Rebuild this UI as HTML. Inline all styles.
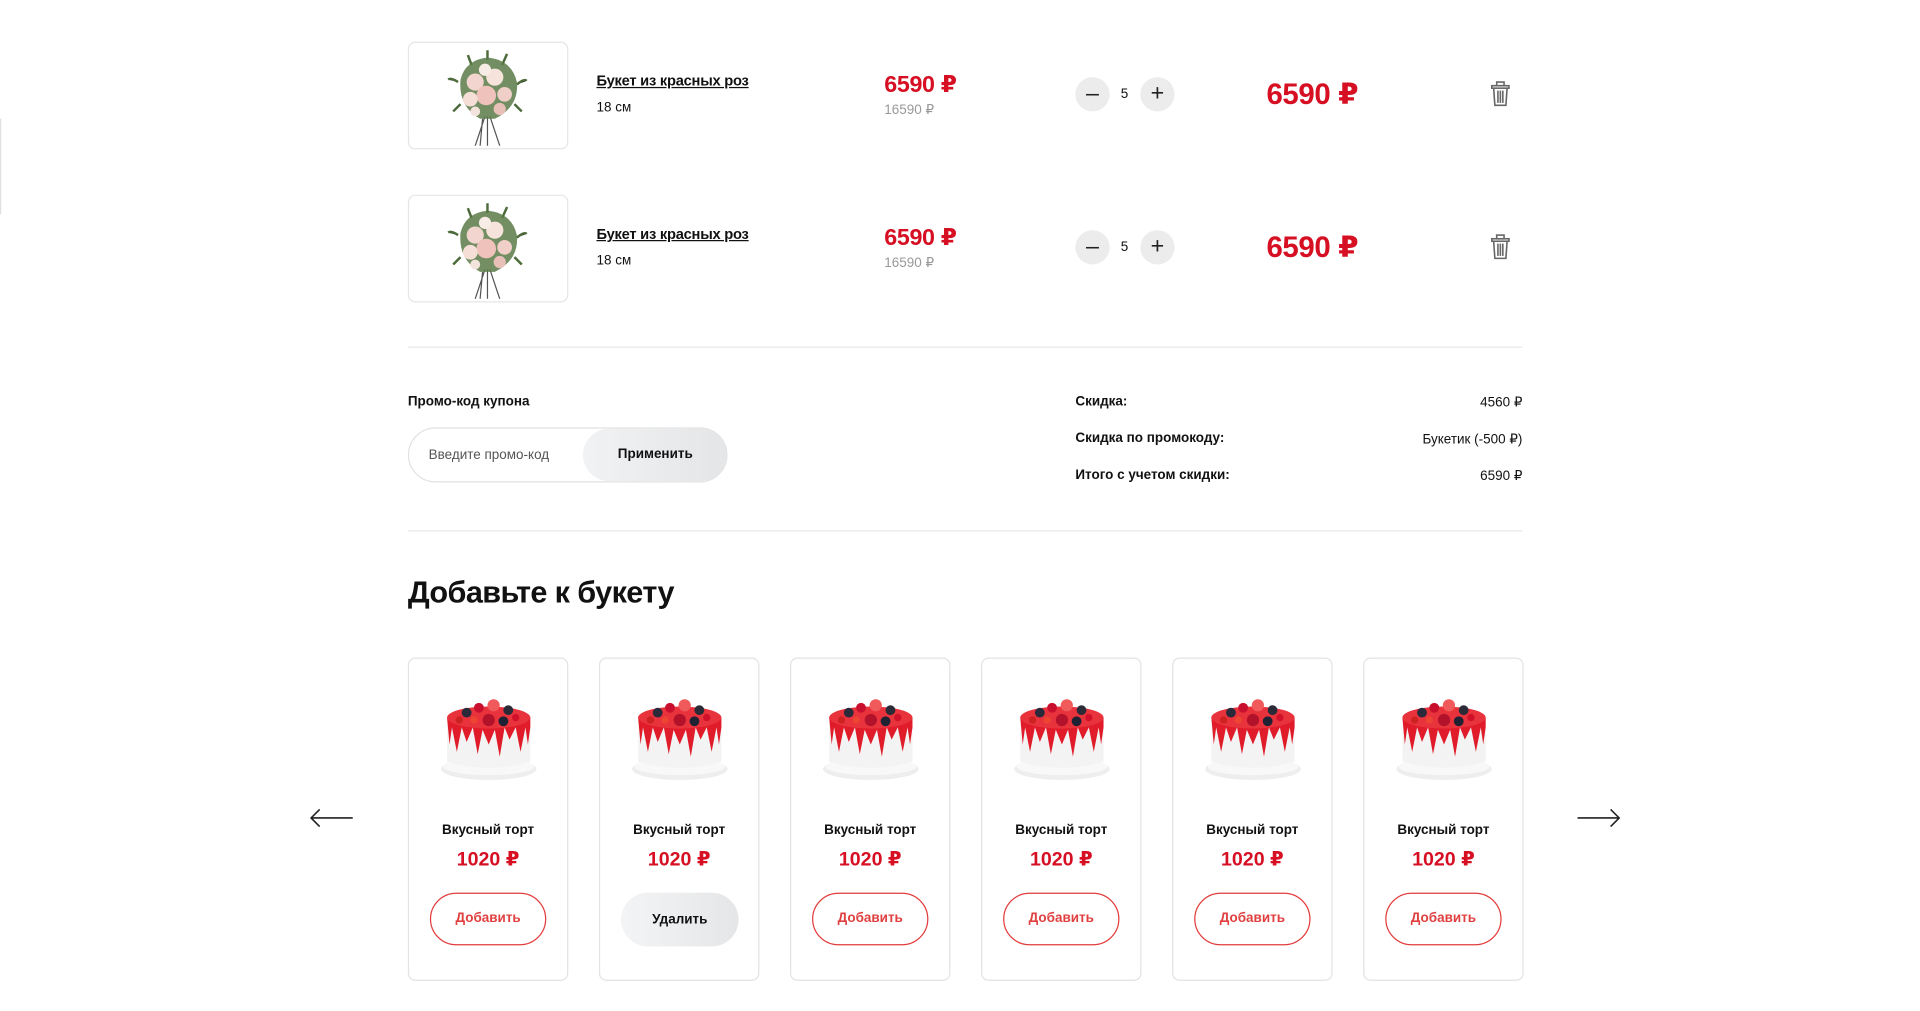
<!DOCTYPE html>
<html><head><meta charset="utf-8"><style>
html,body{margin:0;padding:0;background:#fff;width:1920px;height:1011px;overflow:hidden}
#w{position:absolute;left:0;top:0;width:1570px;height:826px;transform:scale(1.2248,1.2245);transform-origin:0 0;font-family:"Liberation Sans","DejaVu Sans",sans-serif;color:#111}
.a{position:absolute}
.img{border:1px solid #e6e6e6;border-radius:6px;width:129px;height:86px;background:#fff}
.t{font-size:12px;font-weight:bold;text-decoration:underline;letter-spacing:-.2px}
.s{font-size:11px}
.pr{color:#d60f23;font-weight:bold;font-size:19px;letter-spacing:-.3px}
.old{color:#999;font-size:11px}
.c{width:28px;height:28px;border-radius:50%;background:#ececec;text-align:center;line-height:27px;font-size:19px;color:#222}
.tot{color:#d60f23;font-weight:bold;font-size:24px;letter-spacing:-.3px}
.hr{height:1px;background:#e9e9e9;left:333px;width:910px}
.lb{font-size:11px;font-weight:bold}
.v{font-size:11px;right:327px}
.card{width:129px;height:262px;border:1px solid #e3e3e3;border-radius:6px;top:537px}
.nm{position:absolute;left:0;right:0;top:134px;text-align:center;font-size:11px;font-weight:bold}
.cp{position:absolute;left:0;right:0;top:154px;text-align:center;font-size:16px;font-weight:bold;color:#d60f23}
.btn{position:absolute;left:17px;top:191px;width:93px;height:41px;border:1.5px solid #e33b3b;border-radius:22px;text-align:center;line-height:41px;font-size:11px;color:#e04040;font-weight:bold}
.del{border:none;background:linear-gradient(90deg,#f3f4f6,#e5e6e8);color:#111;width:96px;height:44px;line-height:44px}
.cake{position:absolute;left:25px;top:26px}
</style></head><body><div id="w">
<div class="a" style="left:0;top:97px;width:1px;height:78px;background:#e0e0e0"></div>

<svg width="0" height="0" style="position:absolute"><defs>
<g id="bq">
<path d="M56 58 L48 82 M58 58 L58 82 M60 58 L68 82 M54 60 L52 82" stroke="#555" stroke-width="1" fill="none"/>
<path d="M34 30 q-6 -4 -8 -2 M82 32 q6-5 8-3 M45 16 l-3-8 M70 16 l4-9 M58 12 l0-8 M36 48 l-6 6 M80 48 l6 6" stroke="#4d6b3a" stroke-width="2"/>
<path d="M36 28 Q40 12 58 10 Q78 12 82 30 Q84 50 64 60 L52 60 Q34 50 36 28Z" fill="#5b7a46" opacity=".85"/>
<circle cx="48" cy="30" r="7" fill="#f2d5cf"/><circle cx="64" cy="26" r="7" fill="#f6e4dc"/><circle cx="57" cy="41" r="8" fill="#efc2bb"/>
<circle cx="44" cy="44" r="6" fill="#f4ded6"/><circle cx="72" cy="40" r="6" fill="#f0cfc8"/><circle cx="56" cy="20" r="5" fill="#f7ece6"/>
<circle cx="68" cy="52" r="5" fill="#e9c0b8"/><circle cx="48" cy="54" r="4" fill="#f3e3dd"/>
</g>
<g id="ck">
<ellipse cx="40" cy="64" rx="39" ry="9" fill="#eeeeee"/><ellipse cx="40" cy="62" rx="37" ry="7" fill="#f8f8f8"/>
<path d="M6 22 L6 58 Q40 68 74 58 L74 22 Z" fill="#f3f3f3"/>
<path d="M6 22 Q40 32 74 22 L74 30 L72 44 L70 30 L66 50 L62 30 L57 40 L53 30 L49 54 L45 32 L40 44 L35 32 L31 52 L27 30 L22 42 L18 30 L14 50 L10 30 L8 44 Z" fill="#e01b2a"/>
<ellipse cx="40" cy="22" rx="34" ry="9" fill="#e8323c"/>
<circle cx="22" cy="18" r="4" fill="#2a2a3a"/><circle cx="32" cy="14" r="4" fill="#c8102e"/><circle cx="44" cy="12" r="5" fill="#f05a5a"/>
<circle cx="56" cy="16" r="4" fill="#2b2b38"/><circle cx="40" cy="24" r="5" fill="#b3122b"/><circle cx="28" cy="24" r="3" fill="#e43"/>
<circle cx="52" cy="25" r="4" fill="#1f2233"/><circle cx="62" cy="22" r="3" fill="#d1102a"/><circle cx="16" cy="24" r="3" fill="#c22"/>
</g>
<g id="tr" fill="none" stroke="#666" stroke-width="1.3">
<rect x="1" y="4" width="14" height="2"/><rect x="5" y="1" width="6" height="3"/><path d="M2.5 6 L3.5 20 L12.5 20 L13.5 6"/><path d="M6 8 V18 M8 8 V18 M10 8 V18"/>
</g>
</defs></svg>

<div class="a img" style="left:333px;top:34px"><svg width="129" height="86"><use href="#bq" x="6" y="2"/></svg></div>
<div class="a t" style="left:487px;top:59px">Букет из красных роз</div>
<div class="a s" style="left:487px;top:82px">18 см</div>
<div class="a pr" style="left:722px;top:58px">6590 ₽</div>
<div class="a old" style="left:722px;top:83px">16590 ₽</div>
<div class="a c" style="left:878px;top:63px">–</div>
<div class="a s" style="left:915px;top:71px">5</div>
<div class="a c" style="left:931px;top:63px">+</div>
<div class="a tot" style="left:1034px;top:63px">6590 ₽</div>
<svg class="a" style="left:1217px;top:66px" width="16" height="22"><use href="#tr"/></svg>

<div class="a img" style="left:333px;top:159px"><svg width="129" height="86"><use href="#bq" x="6" y="2"/></svg></div>
<div class="a t" style="left:487px;top:184px">Букет из красных роз</div>
<div class="a s" style="left:487px;top:207px">18 см</div>
<div class="a pr" style="left:722px;top:183px">6590 ₽</div>
<div class="a old" style="left:722px;top:208px">16590 ₽</div>
<div class="a c" style="left:878px;top:188px">–</div>
<div class="a s" style="left:915px;top:196px">5</div>
<div class="a c" style="left:931px;top:188px">+</div>
<div class="a tot" style="left:1034px;top:188px">6590 ₽</div>
<svg class="a" style="left:1217px;top:191px" width="16" height="22"><use href="#tr"/></svg>

<div class="a hr" style="top:283px"></div>
<div class="a lb" style="left:333px;top:322px">Промо-код купона</div>
<div class="a" style="left:333px;top:349px;width:259px;height:43px;border:1px solid #e2e2e2;border-radius:23px;overflow:hidden">
<div class="a s" style="left:16px;top:16px;color:#555">Введите промо-код</div>
<div class="a" style="left:142px;top:0;width:118px;height:43px;border-radius:23px;background:linear-gradient(90deg,#f1f2f4,#e4e5e7);text-align:center;line-height:43px;font-size:11px;font-weight:bold">Применить</div>
</div>
<div class="a lb" style="left:878px;top:322px">Скидка:</div>
<div class="a lb" style="left:878px;top:352px">Скидка по промокоду:</div>
<div class="a lb" style="left:878px;top:382px">Итого с учетом скидки:</div>
<div class="a v" style="top:322px">4560 ₽</div>
<div class="a v" style="top:352px">Букетик (-500 ₽)</div>
<div class="a v" style="top:382px">6590 ₽</div>
<div class="a hr" style="top:433px"></div>
<div class="a" style="left:333px;top:470px;font-size:25px;font-weight:bold;letter-spacing:-.5px">Добавьте к букету</div>

<svg class="a" style="left:252px;top:660px" width="37" height="16"><path d="M36 8 H2 M9 1 L2 8 L9 15" stroke="#222" stroke-width="1.3" fill="none"/></svg>
<svg class="a" style="left:1287px;top:660px" width="37" height="16"><path d="M1 8 H35 M28 1 L35 8 L28 15" stroke="#222" stroke-width="1.3" fill="none"/></svg>

<div class="a card" style="left:333px"><svg class="cake" width="80" height="76"><use href="#ck"/></svg><div class="nm">Вкусный торт</div><div class="cp">1020 ₽</div><div class="btn">Добавить</div></div>
<div class="a card" style="left:489px"><svg class="cake" width="80" height="76"><use href="#ck"/></svg><div class="nm">Вкусный торт</div><div class="cp">1020 ₽</div><div class="btn del">Удалить</div></div>
<div class="a card" style="left:645px"><svg class="cake" width="80" height="76"><use href="#ck"/></svg><div class="nm">Вкусный торт</div><div class="cp">1020 ₽</div><div class="btn">Добавить</div></div>
<div class="a card" style="left:801px"><svg class="cake" width="80" height="76"><use href="#ck"/></svg><div class="nm">Вкусный торт</div><div class="cp">1020 ₽</div><div class="btn">Добавить</div></div>
<div class="a card" style="left:957px"><svg class="cake" width="80" height="76"><use href="#ck"/></svg><div class="nm">Вкусный торт</div><div class="cp">1020 ₽</div><div class="btn">Добавить</div></div>
<div class="a card" style="left:1113px"><svg class="cake" width="80" height="76"><use href="#ck"/></svg><div class="nm">Вкусный торт</div><div class="cp">1020 ₽</div><div class="btn">Добавить</div></div>
</div></body></html>
